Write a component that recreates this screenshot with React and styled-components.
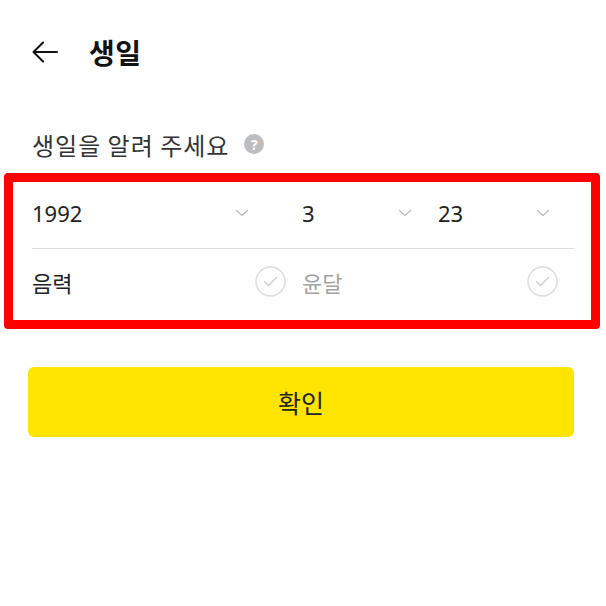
import React from 'react';
import styled, { createGlobalStyle } from 'styled-components';

const GlobalStyle = createGlobalStyle`
  html, body {
    margin: 0;
    padding: 0;
    background: #ffffff;
  }
  body {
    font-family: "Noto Sans", "Noto Sans CJK KR", sans-serif;
    color: #222;
  }
`;

const Page = styled.div`
  width: 606px;
  height: 606px;
  overflow: hidden;
  background: #fff;
  padding: 0 32px;
  box-sizing: border-box;
`;

const Header = styled.div`
  display: flex;
  align-items: center;
  height: 104px;
  gap: 31px;
`;

const BackButton = styled.button`
  border: none;
  background: none;
  padding: 0;
  width: 26px;
  height: 26px;
  display: flex;
  align-items: center;
  justify-content: center;
  color: #111;
`;

const Title = styled.h1`
  margin: 0;
  font-size: 28px;
  font-weight: 700;
  color: #111;
  font-family: "Noto Sans CJK KR", sans-serif;
  letter-spacing: 0.5px;
`;

const Label = styled.div`
  display: flex;
  align-items: center;
  gap: 15px;
  margin-top: 23px;
  height: 34px;
  font-size: 24px;
  letter-spacing: 1px;
  color: #333;
  font-family: "Noto Sans CJK KR", sans-serif;
`;

const HelpIcon = styled.span`
  width: 20px;
  height: 20px;
  border-radius: 50%;
  background: #bdbdbd;
  color: #fff;
  font-size: 14px;
  font-weight: 700;
  letter-spacing: 0;
  display: flex;
  align-items: center;
  justify-content: center;
  font-family: "Noto Sans", sans-serif;
`;

const Form = styled.div`
  margin: 12px -26px 0 -28px;
  border: 9px solid #ff0000;
  border-radius: 4px;
  padding: 0 17px 0 19px;
`;

const Row = styled.div`
  display: grid;
  grid-template-columns: ${p => p.$cols};
  height: ${p => p.$h}px;
  border-bottom: ${p => (p.$line ? '1px solid #dedede' : 'none')};
`;

const Cell = styled.div`
  display: flex;
  align-items: center;
  justify-content: space-between;
  padding-right: ${p => p.$pad}px;
  padding-bottom: ${p => p.$pb || 0}px;
  font-size: 22px;
  color: ${p => (p.$muted ? '#a3a3a3' : '#222')};
  font-family: "Noto Sans", "Noto Sans CJK KR", sans-serif;
`;

const Chevron = () => (
  <svg width="14" height="8" viewBox="0 0 14 8" fill="none">
    <path d="M1.5 1.5l5.5 5 5.5-5" stroke="#bdbdbd" strokeWidth="1.3" strokeLinecap="round" strokeLinejoin="round" />
  </svg>
);

const CheckCircle = () => (
  <svg width="31" height="31" viewBox="0 0 31 31" fill="none">
    <circle cx="15.5" cy="15.5" r="14.5" stroke="#dcdcdc" strokeWidth="1.5" />
    <path d="M9.5 15.5l4 4 8-8" stroke="#d0d0d0" strokeWidth="1.5" strokeLinecap="round" strokeLinejoin="round" />
  </svg>
);

const ConfirmButton = styled.button`
  display: block;
  height: 70px;
  margin: 38px 0 0 -4px;
  width: calc(100% + 4px);
  border: none;
  border-radius: 6px;
  background: #fee500;
  color: #222;
  font-size: 25px;
  font-family: "Noto Sans CJK KR", sans-serif;
`;

const App = () => {
  return (
    <>
      <GlobalStyle />
      <Page>
        <Header>
          <BackButton aria-label="back">
            <svg width="26" height="22" viewBox="0 0 26 22" fill="none">
              <path d="M25 11H2M11 1.5L1.5 11l9.5 9.5" stroke="#111" strokeWidth="2" strokeLinecap="round" strokeLinejoin="round" />
            </svg>
          </BackButton>
          <Title>생일</Title>
        </Header>
        <Label>
          생일을 알려 주세요
          <HelpIcon>?</HelpIcon>
        </Label>
        <Form>
          <Row $cols="270px 136px 1fr" $h={66} $line>
            <Cell $pad={53} $pb={4}>1992<Chevron /></Cell>
            <Cell $pad={26} $pb={4}>3<Chevron /></Cell>
            <Cell $pad={24} $pb={4}>23<Chevron /></Cell>
          </Row>
          <Row $cols="270px 1fr" $h={71}>
            <Cell $pad={16} $pb={6}>음력<CheckCircle /></Cell>
            <Cell $pad={16} $pb={6} $muted>윤달<CheckCircle /></Cell>
          </Row>
        </Form>
        <ConfirmButton>확인</ConfirmButton>
      </Page>
    </>
  );
};

export default App;
